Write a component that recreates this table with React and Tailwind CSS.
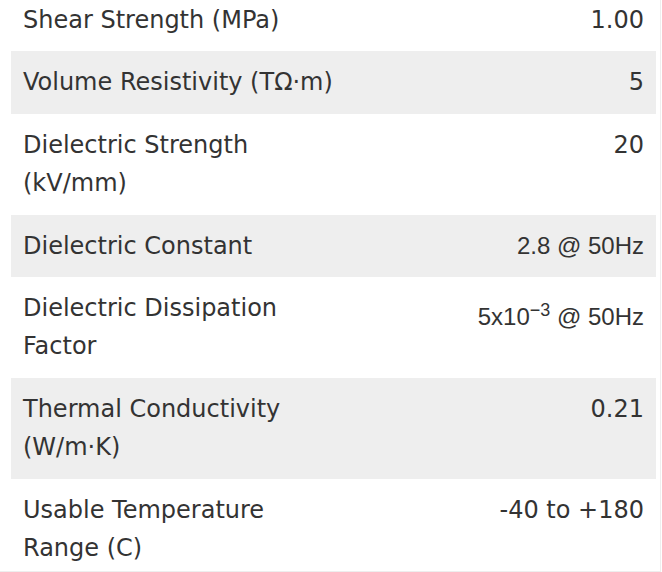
import React from 'react';

const rows = [
    { label: 'Shear Strength (MPa)', value: '1.00' },
    { label: 'Volume Resistivity (TΩ·m)', value: '5' },
    { label: 'Dielectric Strength (kV/mm)', value: '20' },
    { label: 'Dielectric Constant', value: '2.8 @ 50Hz', arial: true },
    {
        label: 'Dielectric Dissipation Factor',
        value: (
            <>
                5x10<sup className="static align-super text-[75%] leading-[42px]">−3</sup> @ 50Hz
            </>
        ),
        arial: true,
    },
    { label: 'Thermal Conductivity (W/m·K)', value: '0.21' },
    { label: 'Usable Temperature Range (C)', value: '-40 to +180' },
];

const App = () => {
    return (
        <div className="w-[661px] h-[572px] overflow-hidden border-r border-b border-[#eeeeee] bg-white pl-[11px] pr-[4px]">
            <table className="-mt-[11px] w-full border-collapse text-[24px] leading-[1.6] text-[#333333] font-['DejaVu_Sans',sans-serif]">
                <tbody>
                    {rows.map((row, i) => (
                        <tr key={i} className={i % 2 === 1 ? 'bg-[#eeeeee]' : 'bg-white'}>
                            <td className="w-[336px] p-3 align-top text-left">{row.label}</td>
                            <td
                                className={
                                    'p-3 align-top text-right ' +
                                    (row.arial ? "font-['Liberation_Sans',Arial,sans-serif]" : '')
                                }
                            >
                                {row.value}
                            </td>
                        </tr>
                    ))}
                </tbody>
            </table>
        </div>
    );
};

export default App;
